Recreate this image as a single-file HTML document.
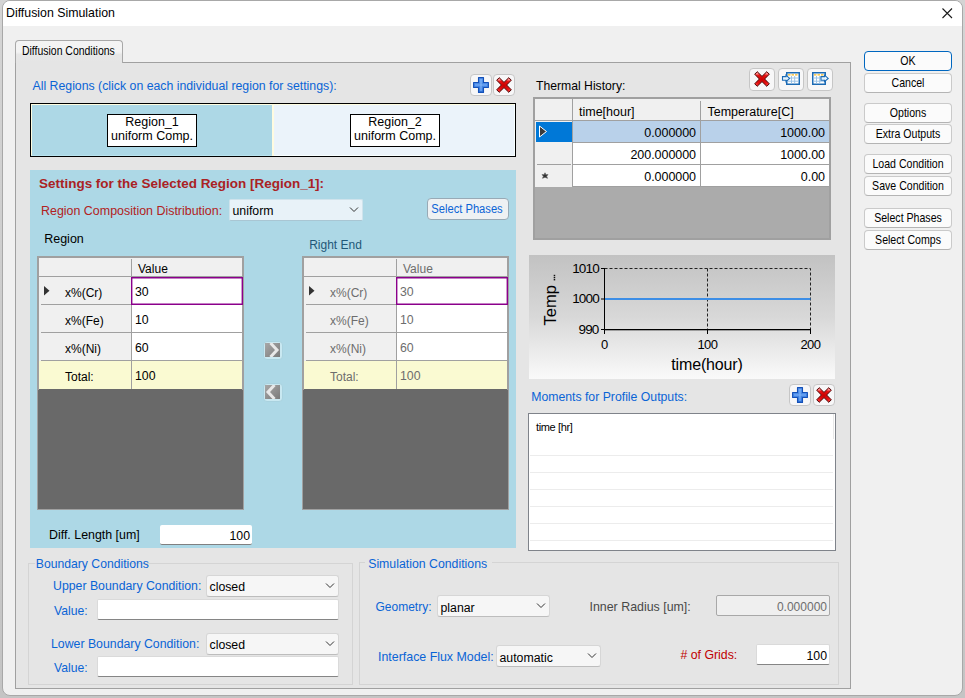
<!DOCTYPE html>
<html><head><meta charset="utf-8"><style>
html,body{margin:0;padding:0;width:965px;height:698px;overflow:hidden;font-family:"Liberation Sans", sans-serif;}
body{position:relative;}
</style></head><body>
<div style="position:absolute;left:0px;top:0px;width:965px;height:698px;box-sizing:border-box;background:linear-gradient(#d4d4d4,#c4c4c4)"></div>
<div style="position:absolute;left:2px;top:0px;width:961px;height:696px;box-sizing:border-box;background:#f0f0f0;border:1px solid #a8a8a8;border-radius:8px;overflow:hidden"></div>
<div style="position:absolute;left:3px;top:1px;width:959px;height:25px;box-sizing:border-box;background:#fff;border-radius:7px 7px 0 0"></div>
<div style="position:absolute;left:6px;top:6.55px;font-size:12.35px;line-height:12.35px;color:#000;font-weight:400;white-space:nowrap;letter-spacing:0px;">Diffusion Simulation</div>
<svg style="position:absolute;left:940px;top:6px" width="14" height="14"><path d="M2.5 2.5 L12 12 M12 2.5 L2.5 12" stroke="#1a1a1a" stroke-width="1.1"/></svg>
<div style="position:absolute;left:15px;top:62px;width:836px;height:627px;box-sizing:border-box;background:#e5e5e5;border:1px solid #a0a0a0"></div>
<div style="position:absolute;left:15px;top:40px;width:108px;height:23px;box-sizing:border-box;background:linear-gradient(#f4f4f4 0%,#f3f3f3 50%,#e6e6e6 62%,#e5e5e5 100%);border:1px solid #a8a8a8;border-bottom:none;border-radius:4px 4px 0 0"></div>
<div style="position:absolute;left:22.4px;top:45.42px;font-size:12.5px;line-height:12.5px;color:#000;font-weight:400;white-space:nowrap;letter-spacing:0px;transform:scaleX(0.836);transform-origin:0 0;">Diffusion Conditions</div>
<div style="position:absolute;left:32.5px;top:79.59px;font-size:12.3px;line-height:12.3px;color:#0a64d6;font-weight:400;white-space:nowrap;letter-spacing:0px;">All Regions (click on each individual region for settings):</div>
<div style="position:absolute;left:470px;top:74px;width:22px;height:22px;box-sizing:border-box;background:#f7f7f8;border:1px solid #c6c6c6;border-radius:4px"></div>
<svg style="position:absolute;left:473px;top:77px" width="16" height="16"><defs><linearGradient id="pg473" x1="0" y1="0" x2="0" y2="1"><stop offset="0" stop-color="#5b9af0"/><stop offset="1" stop-color="#3276dc"/></linearGradient></defs><path d="M5.5 0.6 H10.5 V5.5 H15.4 V10.5 H10.5 V15.4 H5.5 V10.5 H0.6 V5.5 H5.5 Z" fill="url(#pg473)" stroke="#1450b8" stroke-width="1.1" stroke-linejoin="round"/><path d="M8 2 V14 M2 8 H14" stroke="#9cc8ff" stroke-width="1.2" opacity="0.7"/></svg>
<div style="position:absolute;left:493px;top:74px;width:22px;height:22px;box-sizing:border-box;background:#f7f7f8;border:1px solid #c6c6c6;border-radius:4px"></div>
<svg style="position:absolute;left:496px;top:77px" width="16" height="16"><defs><radialGradient id="xg496" cx="0.5" cy="0.55" r="0.6"><stop offset="0" stop-color="#c80000"/><stop offset="0.6" stop-color="#e81010"/><stop offset="1" stop-color="#ff4040"/></radialGradient><linearGradient id="xh496" x1="0" y1="0" x2="0" y2="1"><stop offset="0" stop-color="#fff" stop-opacity="0.75"/><stop offset="0.45" stop-color="#fff" stop-opacity="0"/></linearGradient></defs><path d="M3.2 0.7 L8 5.4 L12.8 0.7 L15.3 3.2 L10.6 8 L15.3 12.8 L12.8 15.3 L8 10.6 L3.2 15.3 L0.7 12.8 L5.4 8 L0.7 3.2 Z" fill="url(#xg496)" stroke="#4a0000" stroke-width="1" stroke-linejoin="round"/><path d="M3.2 1.6 L8 6.4 L12.8 1.6 L14.4 3.2 L10.2 7.4 L5.8 7.4 L1.6 3.2 Z" fill="url(#xh496)"/></svg>
<div style="position:absolute;left:30px;top:103px;width:486px;height:54px;box-sizing:border-box;border:1px solid #000;background:#ebf3fa"></div>
<div style="position:absolute;left:31px;top:104px;width:241px;height:52px;box-sizing:border-box;background:#add8e6;border-top:1px solid #fffde0;border-left:1px solid #fffde0;border-bottom:1px solid #b9e4f0"></div>
<div style="position:absolute;left:272px;top:104px;width:2px;height:52px;box-sizing:border-box;background:#fffbe0"></div>
<div style="position:absolute;left:274px;top:104px;width:241px;height:1px;box-sizing:border-box;background:#fffde0"></div>
<div style="position:absolute;left:514px;top:104px;width:1px;height:52px;box-sizing:border-box;background:#f8ffff"></div>
<div style="position:absolute;left:274px;top:155px;width:240px;height:1px;box-sizing:border-box;background:#f8ffff"></div>
<div style="position:absolute;left:107px;top:114px;width:90px;height:33px;box-sizing:border-box;background:#fff;border:1px solid #000"></div>
<div style="position:absolute;left:350px;top:114px;width:90px;height:33px;box-sizing:border-box;background:#fff;border:1px solid #000"></div>
<div style="position:absolute;left:52px;width:200px;text-align:center;top:115.82px;font-size:12.5px;line-height:12.5px;color:#000;font-weight:400;white-space:nowrap;letter-spacing:0px;">Region_1</div>
<div style="position:absolute;left:52px;width:200px;text-align:center;top:130.02px;font-size:12.5px;line-height:12.5px;color:#000;font-weight:400;white-space:nowrap;letter-spacing:0px;">uniform Comp.</div>
<div style="position:absolute;left:295px;width:200px;text-align:center;top:115.82px;font-size:12.5px;line-height:12.5px;color:#000;font-weight:400;white-space:nowrap;letter-spacing:0px;">Region_2</div>
<div style="position:absolute;left:295px;width:200px;text-align:center;top:130.02px;font-size:12.5px;line-height:12.5px;color:#000;font-weight:400;white-space:nowrap;letter-spacing:0px;">uniform Comp.</div>
<div style="position:absolute;left:30px;top:170px;width:486px;height:378px;box-sizing:border-box;background:#add8e6"></div>
<div style="position:absolute;left:39.3px;top:178.07px;font-size:12.2px;line-height:12.2px;color:#aa2224;font-weight:700;white-space:nowrap;letter-spacing:0px;transform:scaleX(1.105);transform-origin:0 0;">Settings for the Selected Region [Region_1]:</div>
<div style="position:absolute;left:41px;top:205.26px;font-size:12.45px;line-height:12.45px;color:#b22222;font-weight:400;white-space:nowrap;letter-spacing:0px;">Region Composition Distribution:</div>
<div style="position:absolute;left:228.5px;top:198.5px;width:134px;height:22px;box-sizing:border-box;background:#e8f2f8;border:1px solid #cfe3ec;border-bottom-color:#a9c6d3;border-radius:2px"></div>
<div style="position:absolute;left:232.5px;top:204.59px;font-size:12.3px;line-height:12.3px;color:#000;font-weight:400;white-space:nowrap;letter-spacing:0px;">uniform</div>
<svg style="position:absolute;left:349px;top:206px" width="10" height="8"><path d="M1 1.5 L5 5.5 L9 1.5" stroke="#333" stroke-width="1" fill="none"/></svg>
<div style="position:absolute;left:427px;top:198px;width:82px;height:22px;box-sizing:border-box;background:#eef1f3;border:1px solid #98aab6;border-radius:4px"></div>
<div style="position:absolute;left:367px;width:200px;text-align:center;top:203.14px;font-size:12px;line-height:12px;color:#0a64d6;font-weight:400;white-space:nowrap;letter-spacing:0px;transform:scaleX(0.93);transform-origin:50% 0;">Select Phases</div>
<div style="position:absolute;left:44.2px;top:232.92px;font-size:12.5px;line-height:12.5px;color:#000;font-weight:400;white-space:nowrap;letter-spacing:0px;">Region</div>
<div style="position:absolute;left:309.2px;top:239.34px;font-size:12px;line-height:12px;color:#1f5878;font-weight:400;white-space:nowrap;letter-spacing:0px;">Right End</div>
<div style="position:absolute;left:37px;top:256px;width:207px;height:254px;box-sizing:border-box;background:#696969;border:1px solid #a0a0a0"></div>
<div style="position:absolute;left:38px;top:257px;width:205px;height:133px;box-sizing:border-box;border:1px solid #a0a0a0;border-bottom:none"></div>
<div style="position:absolute;left:39px;top:258px;width:203px;height:19px;box-sizing:border-box;background:#f0f0f0;border-bottom:1px solid #a0a0a0"></div>
<div style="position:absolute;left:131px;top:259px;width:1px;height:130px;box-sizing:border-box;background:#a0a0a0"></div>
<div style="position:absolute;left:138px;top:262.64px;font-size:12px;line-height:12px;color:#000;font-weight:400;white-space:nowrap;letter-spacing:0px;">Value</div>
<div style="position:absolute;left:39px;top:277px;width:92px;height:28px;box-sizing:border-box;background:#f0f0f0"></div>
<div style="position:absolute;left:41px;top:304px;width:90px;height:1px;box-sizing:border-box;background:#a0a0a0"></div>
<div style="position:absolute;left:132px;top:277px;width:110px;height:28px;box-sizing:border-box;background:#fff;border-bottom:1px solid #a0a0a0"></div>
<div style="position:absolute;left:65px;top:287.34px;font-size:12px;line-height:12px;color:#000;font-weight:400;white-space:nowrap;letter-spacing:0px;">x%(Cr)</div>
<div style="position:absolute;left:135px;top:286.09px;font-size:12.3px;line-height:12.3px;color:#000;font-weight:400;white-space:nowrap;letter-spacing:0px;">30</div>
<div style="position:absolute;left:39px;top:305px;width:92px;height:28px;box-sizing:border-box;background:#f0f0f0"></div>
<div style="position:absolute;left:41px;top:332px;width:90px;height:1px;box-sizing:border-box;background:#a0a0a0"></div>
<div style="position:absolute;left:132px;top:305px;width:110px;height:28px;box-sizing:border-box;background:#fff;border-bottom:1px solid #a0a0a0"></div>
<div style="position:absolute;left:65px;top:315.34px;font-size:12px;line-height:12px;color:#000;font-weight:400;white-space:nowrap;letter-spacing:0px;">x%(Fe)</div>
<div style="position:absolute;left:135px;top:314.09px;font-size:12.3px;line-height:12.3px;color:#000;font-weight:400;white-space:nowrap;letter-spacing:0px;">10</div>
<div style="position:absolute;left:39px;top:333px;width:92px;height:28px;box-sizing:border-box;background:#f0f0f0"></div>
<div style="position:absolute;left:41px;top:360px;width:90px;height:1px;box-sizing:border-box;background:#a0a0a0"></div>
<div style="position:absolute;left:132px;top:333px;width:110px;height:28px;box-sizing:border-box;background:#fff;border-bottom:1px solid #a0a0a0"></div>
<div style="position:absolute;left:65px;top:343.34px;font-size:12px;line-height:12px;color:#000;font-weight:400;white-space:nowrap;letter-spacing:0px;">x%(Ni)</div>
<div style="position:absolute;left:135px;top:342.09px;font-size:12.3px;line-height:12.3px;color:#000;font-weight:400;white-space:nowrap;letter-spacing:0px;">60</div>
<div style="position:absolute;left:39px;top:361px;width:203px;height:28px;box-sizing:border-box;background:#fafad2"></div>
<div style="position:absolute;left:131px;top:361px;width:1px;height:28px;box-sizing:border-box;background:#a0a0a0"></div>
<div style="position:absolute;left:65px;top:371.34px;font-size:12px;line-height:12px;color:#000;font-weight:400;white-space:nowrap;letter-spacing:0px;">Total:</div>
<div style="position:absolute;left:135px;top:370.09px;font-size:12.3px;line-height:12.3px;color:#000;font-weight:400;white-space:nowrap;letter-spacing:0px;">100</div>
<div style="position:absolute;left:131px;top:277px;width:112px;height:28px;box-sizing:border-box;border:1px solid #8b008b;box-shadow:inset 0 0 0 0.4px #8b008b"></div>
<svg style="position:absolute;left:44px;top:286px" width="7" height="11"><path d="M0 0 L5.5 4.75 L0 9.5 Z" fill="#333"/></svg>
<div style="position:absolute;left:302px;top:256px;width:207px;height:254px;box-sizing:border-box;background:#696969;border:1px solid #a0a0a0"></div>
<div style="position:absolute;left:303px;top:257px;width:205px;height:133px;box-sizing:border-box;border:1px solid #a0a0a0;border-bottom:none"></div>
<div style="position:absolute;left:304px;top:258px;width:203px;height:19px;box-sizing:border-box;background:#f0f0f0;border-bottom:1px solid #a0a0a0"></div>
<div style="position:absolute;left:396px;top:259px;width:1px;height:130px;box-sizing:border-box;background:#a0a0a0"></div>
<div style="position:absolute;left:403px;top:262.64px;font-size:12px;line-height:12px;color:#6d6d6d;font-weight:400;white-space:nowrap;letter-spacing:0px;">Value</div>
<div style="position:absolute;left:304px;top:277px;width:92px;height:28px;box-sizing:border-box;background:#f0f0f0"></div>
<div style="position:absolute;left:306px;top:304px;width:90px;height:1px;box-sizing:border-box;background:#a0a0a0"></div>
<div style="position:absolute;left:397px;top:277px;width:110px;height:28px;box-sizing:border-box;background:#fff;border-bottom:1px solid #a0a0a0"></div>
<div style="position:absolute;left:330px;top:287.34px;font-size:12px;line-height:12px;color:#6d6d6d;font-weight:400;white-space:nowrap;letter-spacing:0px;">x%(Cr)</div>
<div style="position:absolute;left:400px;top:286.09px;font-size:12.3px;line-height:12.3px;color:#6d6d6d;font-weight:400;white-space:nowrap;letter-spacing:0px;">30</div>
<div style="position:absolute;left:304px;top:305px;width:92px;height:28px;box-sizing:border-box;background:#f0f0f0"></div>
<div style="position:absolute;left:306px;top:332px;width:90px;height:1px;box-sizing:border-box;background:#a0a0a0"></div>
<div style="position:absolute;left:397px;top:305px;width:110px;height:28px;box-sizing:border-box;background:#fff;border-bottom:1px solid #a0a0a0"></div>
<div style="position:absolute;left:330px;top:315.34px;font-size:12px;line-height:12px;color:#6d6d6d;font-weight:400;white-space:nowrap;letter-spacing:0px;">x%(Fe)</div>
<div style="position:absolute;left:400px;top:314.09px;font-size:12.3px;line-height:12.3px;color:#6d6d6d;font-weight:400;white-space:nowrap;letter-spacing:0px;">10</div>
<div style="position:absolute;left:304px;top:333px;width:92px;height:28px;box-sizing:border-box;background:#f0f0f0"></div>
<div style="position:absolute;left:306px;top:360px;width:90px;height:1px;box-sizing:border-box;background:#a0a0a0"></div>
<div style="position:absolute;left:397px;top:333px;width:110px;height:28px;box-sizing:border-box;background:#fff;border-bottom:1px solid #a0a0a0"></div>
<div style="position:absolute;left:330px;top:343.34px;font-size:12px;line-height:12px;color:#6d6d6d;font-weight:400;white-space:nowrap;letter-spacing:0px;">x%(Ni)</div>
<div style="position:absolute;left:400px;top:342.09px;font-size:12.3px;line-height:12.3px;color:#6d6d6d;font-weight:400;white-space:nowrap;letter-spacing:0px;">60</div>
<div style="position:absolute;left:304px;top:361px;width:203px;height:28px;box-sizing:border-box;background:#fafad2"></div>
<div style="position:absolute;left:396px;top:361px;width:1px;height:28px;box-sizing:border-box;background:#a0a0a0"></div>
<div style="position:absolute;left:330px;top:371.34px;font-size:12px;line-height:12px;color:#6d6d6d;font-weight:400;white-space:nowrap;letter-spacing:0px;">Total:</div>
<div style="position:absolute;left:400px;top:370.09px;font-size:12.3px;line-height:12.3px;color:#6d6d6d;font-weight:400;white-space:nowrap;letter-spacing:0px;">100</div>
<div style="position:absolute;left:396px;top:277px;width:112px;height:28px;box-sizing:border-box;border:1px solid #8b008b;box-shadow:inset 0 0 0 0.4px #8b008b"></div>
<svg style="position:absolute;left:309px;top:286px" width="7" height="11"><path d="M0 0 L5.5 4.75 L0 9.5 Z" fill="#333"/></svg>
<div style="position:absolute;left:263px;top:341px;width:20px;height:19px;box-sizing:border-box;background:#c9e8f1;border:1px solid #a9d2df;border-radius:4px"></div>
<svg style="position:absolute;left:265px;top:343px" width="15" height="14"><defs><linearGradient id="ag341" x1="0" y1="0" x2="1" y2="1"><stop offset="0" stop-color="#a8a8a8"/><stop offset="1" stop-color="#7a7a7a"/></linearGradient></defs><rect x="0" y="0" width="15" height="14" fill="url(#ag341)"/><path d="M5.5 0 L12 7 L5.5 14" stroke="#e8e8e8" stroke-width="3" fill="none"/></svg>
<div style="position:absolute;left:263px;top:383px;width:20px;height:19px;box-sizing:border-box;background:#c9e8f1;border:1px solid #a9d2df;border-radius:4px"></div>
<svg style="position:absolute;left:265px;top:385px" width="15" height="14"><defs><linearGradient id="ag383" x1="0" y1="0" x2="1" y2="1"><stop offset="0" stop-color="#a8a8a8"/><stop offset="1" stop-color="#7a7a7a"/></linearGradient></defs><rect x="0" y="0" width="15" height="14" fill="url(#ag383)"/><path d="M9.5 0 L3 7 L9.5 14" stroke="#e8e8e8" stroke-width="3" fill="none"/></svg>
<div style="position:absolute;left:49px;top:529.00px;font-size:12.4px;line-height:12.4px;color:#000;font-weight:400;white-space:nowrap;letter-spacing:0px;">Diff. Length [um]</div>
<div style="position:absolute;left:160px;top:525px;width:92px;height:20px;box-sizing:border-box;background:#fff;border-bottom:1px solid #808080;border-radius:2px"></div>
<div style="position:absolute;right:715px;top:529.59px;font-size:12.3px;line-height:12.3px;color:#000;font-weight:400;white-space:nowrap;letter-spacing:0px;">100</div>
<div style="position:absolute;left:536px;top:79.67px;font-size:12.2px;line-height:12.2px;color:#000;font-weight:400;white-space:nowrap;letter-spacing:0px;">Thermal History:</div>
<div style="position:absolute;left:749px;top:68px;width:26px;height:23px;box-sizing:border-box;background:#f7f7f8;border:1px solid #c6c6c6;border-radius:4px"></div>
<svg style="position:absolute;left:754px;top:71px" width="16" height="16"><defs><radialGradient id="xg754" cx="0.5" cy="0.55" r="0.6"><stop offset="0" stop-color="#c80000"/><stop offset="0.6" stop-color="#e81010"/><stop offset="1" stop-color="#ff4040"/></radialGradient><linearGradient id="xh754" x1="0" y1="0" x2="0" y2="1"><stop offset="0" stop-color="#fff" stop-opacity="0.75"/><stop offset="0.45" stop-color="#fff" stop-opacity="0"/></linearGradient></defs><path d="M3.2 0.7 L8 5.4 L12.8 0.7 L15.3 3.2 L10.6 8 L15.3 12.8 L12.8 15.3 L8 10.6 L3.2 15.3 L0.7 12.8 L5.4 8 L0.7 3.2 Z" fill="url(#xg754)" stroke="#4a0000" stroke-width="1" stroke-linejoin="round"/><path d="M3.2 1.6 L8 6.4 L12.8 1.6 L14.4 3.2 L10.2 7.4 L5.8 7.4 L1.6 3.2 Z" fill="url(#xh754)"/></svg>
<div style="position:absolute;left:778px;top:68px;width:26px;height:23px;box-sizing:border-box;background:#f7f7f8;border:1px solid #c6c6c6;border-radius:4px"></div>
<div style="position:absolute;left:807px;top:68px;width:26px;height:23px;box-sizing:border-box;background:#f7f7f8;border:1px solid #c6c6c6;border-radius:4px"></div>
<svg style="position:absolute;left:781px;top:70px" width="20" height="18">
<rect x="5.75" y="2.75" width="12.5" height="11.5" fill="#fff" stroke="#1c6bb5" stroke-width="1.5"/>
<path d="M7 4.8 H9.5 M10.5 4.8 H13 M14 4.8 H16.5" stroke="#f5b820" stroke-width="1.2"/>
<path d="M6.5 8 H17.5 M6.5 11.2 H17.5 M10.5 6 V13.5 M13.7 6 V13.5" stroke="#9cc3e6" stroke-width="1"/>
<path d="M1.5 6.6 H5 V5.2 L8.6 8.4 L5 11.6 V10.2 H1.5 Z" fill="#e6f4ff" stroke="#1c6bb5" stroke-width="1.1"/>
</svg>
<svg style="position:absolute;left:810px;top:70px" width="20" height="18">
<rect x="2.75" y="2.75" width="12.5" height="11.5" fill="#fff" stroke="#1c6bb5" stroke-width="1.5"/>
<path d="M4 4.8 H6.5 M7.5 4.8 H10 M11 4.8 H13.5" stroke="#f5b820" stroke-width="1.2"/>
<path d="M3.5 8 H14.5 M3.5 11.2 H14.5 M6.5 6 V13.5 M9.7 6 V13.5" stroke="#9cc3e6" stroke-width="1"/>
<path d="M11 6.6 H14.5 V5.2 L18.2 8.4 L14.5 11.6 V10.2 H11 Z" fill="#e6f4ff" stroke="#1c6bb5" stroke-width="1.1"/>
</svg>
<div style="position:absolute;left:533px;top:97px;width:298px;height:143px;box-sizing:border-box;background:#ababab;border:2px solid #a0a0a0"></div>
<div style="position:absolute;left:535px;top:99px;width:294px;height:22px;box-sizing:border-box;background:#f0f0f0;border-bottom:1px solid #a0a0a0"></div>
<div style="position:absolute;left:572px;top:99px;width:1px;height:88px;box-sizing:border-box;background:#a0a0a0"></div>
<div style="position:absolute;left:700px;top:101px;width:1px;height:86px;box-sizing:border-box;background:#a0a0a0"></div>
<div style="position:absolute;left:579px;top:106.42px;font-size:12.5px;line-height:12.5px;color:#000;font-weight:400;white-space:nowrap;letter-spacing:0px;">time[hour]</div>
<div style="position:absolute;left:707.5px;top:106.42px;font-size:12.5px;line-height:12.5px;color:#000;font-weight:400;white-space:nowrap;letter-spacing:0px;">Temperature[C]</div>
<div style="position:absolute;left:535px;top:121px;width:37px;height:22px;box-sizing:border-box;background:#f0f0f0"></div>
<div style="position:absolute;left:536px;top:122px;width:36px;height:20px;box-sizing:border-box;background:#0078d7"></div>
<div style="position:absolute;left:573px;top:121px;width:127px;height:22px;box-sizing:border-box;background:#b9d1ea;border-bottom:1px solid #a0a0a0"></div>
<div style="position:absolute;left:701px;top:121px;width:128px;height:22px;box-sizing:border-box;background:#b9d1ea;border-bottom:1px solid #a0a0a0"></div>
<div style="position:absolute;right:269px;top:127.42px;font-size:12.5px;line-height:12.5px;color:#000;font-weight:400;white-space:nowrap;letter-spacing:-0.05px;">0.000000</div>
<div style="position:absolute;right:140px;top:127.42px;font-size:12.5px;line-height:12.5px;color:#000;font-weight:400;white-space:nowrap;letter-spacing:-0.05px;">1000.00</div>
<div style="position:absolute;left:535px;top:143px;width:37px;height:22px;box-sizing:border-box;background:#f0f0f0"></div>
<div style="position:absolute;left:537px;top:164px;width:34px;height:1px;box-sizing:border-box;background:#a0a0a0"></div>
<div style="position:absolute;left:573px;top:143px;width:127px;height:22px;box-sizing:border-box;background:#fff;border-bottom:1px solid #a0a0a0"></div>
<div style="position:absolute;left:701px;top:143px;width:128px;height:22px;box-sizing:border-box;background:#fff;border-bottom:1px solid #a0a0a0"></div>
<div style="position:absolute;right:269px;top:149.42px;font-size:12.5px;line-height:12.5px;color:#000;font-weight:400;white-space:nowrap;letter-spacing:-0.05px;">200.000000</div>
<div style="position:absolute;right:140px;top:149.42px;font-size:12.5px;line-height:12.5px;color:#000;font-weight:400;white-space:nowrap;letter-spacing:-0.05px;">1000.00</div>
<div style="position:absolute;left:535px;top:165px;width:37px;height:22px;box-sizing:border-box;background:#f0f0f0"></div>
<div style="position:absolute;left:573px;top:165px;width:127px;height:22px;box-sizing:border-box;background:#fff;border-bottom:1px solid #a0a0a0"></div>
<div style="position:absolute;left:701px;top:165px;width:128px;height:22px;box-sizing:border-box;background:#fff;border-bottom:1px solid #a0a0a0"></div>
<div style="position:absolute;right:269px;top:171.42px;font-size:12.5px;line-height:12.5px;color:#000;font-weight:400;white-space:nowrap;letter-spacing:-0.05px;">0.000000</div>
<div style="position:absolute;right:140px;top:171.42px;font-size:12.5px;line-height:12.5px;color:#000;font-weight:400;white-space:nowrap;letter-spacing:-0.05px;">0.00</div>
<svg style="position:absolute;left:538px;top:125px" width="11" height="13"><path d="M1.5 1 L8.5 6.5 L1.5 12 Z" fill="#3a3a3a" stroke="#fff" stroke-width="1"/></svg>
<svg style="position:absolute;left:541px;top:172px" width="8" height="8"><path d="M4 0.8 L4.9 2.8 L7 2.6 L5.6 4.2 L6.5 6.3 L4 5.3 L1.5 6.3 L2.4 4.2 L1 2.6 L3.1 2.8 Z" fill="#333" stroke="#555" stroke-width="0.6"/></svg>
<div style="position:absolute;left:529px;top:255px;width:306px;height:124px;box-sizing:border-box;background:linear-gradient(#c2c2c2,#d8d8d8 50%,#fafafa)"></div>
<svg style="position:absolute;left:529px;top:255px" width="306" height="124">
<path d="M75.5 13.5 H281.5 V74.5" stroke="#222" stroke-width="1" stroke-dasharray="3,2" fill="none"/>
<path d="M178.5 13.5 V74.5" stroke="#222" stroke-width="1" stroke-dasharray="3,2" fill="none"/>
<path d="M75.5 13 V74.5 H282" stroke="#000" stroke-width="1" fill="none"/><path d="M75.5 13 V75 H282" stroke="#000" stroke-width="0.6" fill="none"/>
<path d="M72 13.5 H75.5 M72 44 H75.5 M72 74.5 H75.5 M75.5 75 V79 M178.5 75 V79 M281.5 75 V79" stroke="#000" stroke-width="1" fill="none"/>
<path d="M76 44 H281.5" stroke="#3d8ee6" stroke-width="2" fill="none"/>
</svg>
<div style="position:absolute;right:366.20000000000005px;top:261.57px;font-size:13.5px;line-height:13.5px;color:#000;font-weight:400;white-space:nowrap;letter-spacing:-0.85px;">1010</div>
<div style="position:absolute;right:366.20000000000005px;top:291.57px;font-size:13.5px;line-height:13.5px;color:#000;font-weight:400;white-space:nowrap;letter-spacing:-0.85px;">1000</div>
<div style="position:absolute;right:366.5px;top:322.57px;font-size:13.5px;line-height:13.5px;color:#000;font-weight:400;white-space:nowrap;letter-spacing:-0.85px;">990</div>
<div style="position:absolute;left:504.5px;width:200px;text-align:center;top:337.50px;font-size:13px;line-height:13px;color:#000;font-weight:400;white-space:nowrap;letter-spacing:0px;">0</div>
<div style="position:absolute;left:607.5px;width:200px;text-align:center;top:338.00px;font-size:13px;line-height:13px;color:#000;font-weight:400;white-space:nowrap;letter-spacing:-0.5px;">100</div>
<div style="position:absolute;left:710.5px;width:200px;text-align:center;top:338.00px;font-size:13px;line-height:13px;color:#000;font-weight:400;white-space:nowrap;letter-spacing:-0.5px;">200</div>
<div style="position:absolute;left:607px;width:200px;text-align:center;top:356.96px;font-size:16px;line-height:16px;color:#000;font-weight:400;white-space:nowrap;letter-spacing:-0.15px;">time(hour)</div>
<div style="position:absolute;left:520px;top:292.5px;width:60px;height:20px;transform:rotate(-90deg);font-size:16.5px;line-height:20px;text-align:center;color:#000;letter-spacing:0px">Temp&nbsp;</div>
<svg style="position:absolute;left:552px;top:273px" width="5" height="9"><rect x="1.7" y="1.8" width="1.5" height="1.4" fill="#111"/><rect x="1.7" y="3.9" width="1.5" height="1.4" fill="#111"/><rect x="1.7" y="6" width="1.5" height="1.4" fill="#111"/></svg>
<div style="position:absolute;left:531.2px;top:390.63px;font-size:12.25px;line-height:12.25px;color:#0a64d6;font-weight:400;white-space:nowrap;letter-spacing:0px;">Moments for Profile Outputs:</div>
<div style="position:absolute;left:789px;top:384px;width:22px;height:22px;box-sizing:border-box;background:#f7f7f8;border:1px solid #c6c6c6;border-radius:4px"></div>
<svg style="position:absolute;left:792px;top:387px" width="16" height="16"><defs><linearGradient id="pg792" x1="0" y1="0" x2="0" y2="1"><stop offset="0" stop-color="#5b9af0"/><stop offset="1" stop-color="#3276dc"/></linearGradient></defs><path d="M5.5 0.6 H10.5 V5.5 H15.4 V10.5 H10.5 V15.4 H5.5 V10.5 H0.6 V5.5 H5.5 Z" fill="url(#pg792)" stroke="#1450b8" stroke-width="1.1" stroke-linejoin="round"/><path d="M8 2 V14 M2 8 H14" stroke="#9cc8ff" stroke-width="1.2" opacity="0.7"/></svg>
<div style="position:absolute;left:813px;top:384px;width:22px;height:22px;box-sizing:border-box;background:#f7f7f8;border:1px solid #c6c6c6;border-radius:4px"></div>
<svg style="position:absolute;left:816px;top:387px" width="16" height="16"><defs><radialGradient id="xg816" cx="0.5" cy="0.55" r="0.6"><stop offset="0" stop-color="#c80000"/><stop offset="0.6" stop-color="#e81010"/><stop offset="1" stop-color="#ff4040"/></radialGradient><linearGradient id="xh816" x1="0" y1="0" x2="0" y2="1"><stop offset="0" stop-color="#fff" stop-opacity="0.75"/><stop offset="0.45" stop-color="#fff" stop-opacity="0"/></linearGradient></defs><path d="M3.2 0.7 L8 5.4 L12.8 0.7 L15.3 3.2 L10.6 8 L15.3 12.8 L12.8 15.3 L8 10.6 L3.2 15.3 L0.7 12.8 L5.4 8 L0.7 3.2 Z" fill="url(#xg816)" stroke="#4a0000" stroke-width="1" stroke-linejoin="round"/><path d="M3.2 1.6 L8 6.4 L12.8 1.6 L14.4 3.2 L10.2 7.4 L5.8 7.4 L1.6 3.2 Z" fill="url(#xh816)"/></svg>
<div style="position:absolute;left:528px;top:413px;width:308px;height:138px;box-sizing:border-box;background:#fff;border:1px solid #7f838a"></div>
<div style="position:absolute;left:536px;top:421.69px;font-size:11px;line-height:11px;color:#000;font-weight:400;white-space:nowrap;letter-spacing:-0.35px;">time [hr]</div>
<div style="position:absolute;left:530px;top:455px;width:303px;height:1px;box-sizing:border-box;background:#ececec"></div>
<div style="position:absolute;left:530px;top:472px;width:303px;height:1px;box-sizing:border-box;background:#ececec"></div>
<div style="position:absolute;left:530px;top:489px;width:303px;height:1px;box-sizing:border-box;background:#ececec"></div>
<div style="position:absolute;left:530px;top:506px;width:303px;height:1px;box-sizing:border-box;background:#ececec"></div>
<div style="position:absolute;left:530px;top:523px;width:303px;height:1px;box-sizing:border-box;background:#ececec"></div>
<div style="position:absolute;left:530px;top:540px;width:303px;height:1px;box-sizing:border-box;background:#ececec"></div>
<div style="position:absolute;left:833px;top:414px;width:1px;height:25px;box-sizing:border-box;background:#e8e8e8"></div>
<div style="position:absolute;left:27.5px;top:562.5px;width:325.5px;height:122px;box-sizing:border-box;border:1px solid #d4d4d4"></div>
<div style="position:absolute;left:35px;top:560.5px;width:88px;height:5px;box-sizing:border-box;background:#e5e5e5"></div>
<div style="position:absolute;left:35.8px;top:557.67px;font-size:12.2px;line-height:12.2px;color:#0a64d6;font-weight:400;white-space:nowrap;letter-spacing:0px;">Boundary Conditions</div>
<div style="position:absolute;left:53px;top:580.09px;font-size:12.3px;line-height:12.3px;color:#0a64d6;font-weight:400;white-space:nowrap;letter-spacing:0px;">Upper Boundary Condition:</div>
<div style="position:absolute;left:205.5px;top:574.5px;width:133px;height:22px;box-sizing:border-box;background:#f6f6f6;border:1px solid #d6d6d6;border-bottom-color:#bdbdbd;border-radius:3px"></div>
<div style="position:absolute;left:209.5px;top:581.09px;font-size:12.3px;line-height:12.3px;color:#000;font-weight:400;white-space:nowrap;letter-spacing:0px;">closed</div>
<svg style="position:absolute;left:324.5px;top:581.5px" width="10" height="8"><path d="M1 1.5 L5 5.5 L9 1.5" stroke="#333" stroke-width="1" fill="none"/></svg>
<div style="position:absolute;left:54px;top:605.17px;font-size:12.2px;line-height:12.2px;color:#0a64d6;font-weight:400;white-space:nowrap;letter-spacing:0px;">Value:</div>
<div style="position:absolute;left:97px;top:599px;width:242px;height:21px;box-sizing:border-box;background:#fff;border:1px solid #dadada;border-bottom:1px solid #858585;border-radius:2px"></div>
<div style="position:absolute;left:51px;top:637.59px;font-size:12.3px;line-height:12.3px;color:#0a64d6;font-weight:400;white-space:nowrap;letter-spacing:0px;">Lower Boundary Condition:</div>
<div style="position:absolute;left:205.5px;top:632.5px;width:133px;height:22px;box-sizing:border-box;background:#f6f6f6;border:1px solid #d6d6d6;border-bottom-color:#bdbdbd;border-radius:3px"></div>
<div style="position:absolute;left:209.5px;top:639.09px;font-size:12.3px;line-height:12.3px;color:#000;font-weight:400;white-space:nowrap;letter-spacing:0px;">closed</div>
<svg style="position:absolute;left:324.5px;top:639.5px" width="10" height="8"><path d="M1 1.5 L5 5.5 L9 1.5" stroke="#333" stroke-width="1" fill="none"/></svg>
<div style="position:absolute;left:54px;top:661.97px;font-size:12.2px;line-height:12.2px;color:#0a64d6;font-weight:400;white-space:nowrap;letter-spacing:0px;">Value:</div>
<div style="position:absolute;left:97px;top:656px;width:242px;height:21px;box-sizing:border-box;background:#fff;border:1px solid #dadada;border-bottom:1px solid #858585;border-radius:2px"></div>
<div style="position:absolute;left:359px;top:562px;width:480px;height:123px;box-sizing:border-box;border:1px solid #d4d4d4"></div>
<div style="position:absolute;left:365px;top:560px;width:127px;height:5px;box-sizing:border-box;background:#e5e5e5"></div>
<div style="position:absolute;left:368.2px;top:557.89px;font-size:12.3px;line-height:12.3px;color:#0a64d6;font-weight:400;white-space:nowrap;letter-spacing:0px;">Simulation Conditions</div>
<div style="position:absolute;left:375.5px;top:601.14px;font-size:12px;line-height:12px;color:#0a64d6;font-weight:400;white-space:nowrap;letter-spacing:0px;">Geometry:</div>
<div style="position:absolute;left:436.5px;top:595px;width:113px;height:22px;box-sizing:border-box;background:#f6f6f6;border:1px solid #d6d6d6;border-bottom-color:#bdbdbd;border-radius:3px"></div>
<div style="position:absolute;left:440.5px;top:601.59px;font-size:12.3px;line-height:12.3px;color:#000;font-weight:400;white-space:nowrap;letter-spacing:0px;">planar</div>
<svg style="position:absolute;left:535.5px;top:602px" width="10" height="8"><path d="M1 1.5 L5 5.5 L9 1.5" stroke="#333" stroke-width="1" fill="none"/></svg>
<div style="position:absolute;left:589.5px;top:600.50px;font-size:12.4px;line-height:12.4px;color:#484848;font-weight:400;white-space:nowrap;letter-spacing:0px;">Inner Radius [um]:</div>
<div style="position:absolute;left:716px;top:594.5px;width:114px;height:21px;box-sizing:border-box;background:#efefef;border:1px solid #a8a8a8;border-radius:2px"></div>
<div style="position:absolute;right:138px;top:600.84px;font-size:12px;line-height:12px;color:#6d6d6d;font-weight:400;white-space:nowrap;letter-spacing:0px;">0.000000</div>
<div style="position:absolute;left:378px;top:650.50px;font-size:12.4px;line-height:12.4px;color:#0a64d6;font-weight:400;white-space:nowrap;letter-spacing:0px;">Interface Flux Model:</div>
<div style="position:absolute;left:495.5px;top:645px;width:105px;height:22px;box-sizing:border-box;background:#f6f6f6;border:1px solid #d6d6d6;border-bottom-color:#bdbdbd;border-radius:3px"></div>
<div style="position:absolute;left:499.5px;top:651.59px;font-size:12.3px;line-height:12.3px;color:#000;font-weight:400;white-space:nowrap;letter-spacing:0px;">automatic</div>
<svg style="position:absolute;left:586.5px;top:652px" width="10" height="8"><path d="M1 1.5 L5 5.5 L9 1.5" stroke="#333" stroke-width="1" fill="none"/></svg>
<div style="position:absolute;left:680.5px;top:648.59px;font-size:12.3px;line-height:12.3px;color:#c00000;font-weight:400;white-space:nowrap;letter-spacing:0px;"># of Grids:</div>
<div style="position:absolute;left:755.5px;top:644px;width:74px;height:21px;box-sizing:border-box;background:#fff;border:1px solid #dadada;border-bottom:1px solid #858585;border-radius:2px"></div>
<div style="position:absolute;right:138px;top:649.59px;font-size:12.3px;line-height:12.3px;color:#000;font-weight:400;white-space:nowrap;letter-spacing:0px;">100</div>
<div style="position:absolute;left:864px;top:51px;width:88px;height:20px;box-sizing:border-box;background:#fbfbfb;border:1px solid #0067c0;border-bottom-color:#0067c0;border-radius:4px"></div>
<div style="position:absolute;left:807.5px;width:200px;text-align:center;top:54.83px;font-size:12.6px;line-height:12.6px;color:#000;font-weight:400;white-space:nowrap;letter-spacing:0px;transform:scaleX(0.84);transform-origin:50% 0;">OK</div>
<div style="position:absolute;left:864px;top:73px;width:88px;height:20px;box-sizing:border-box;background:#fbfbfb;border:1px solid #cacaca;border-bottom-color:#b4b4b4;border-radius:4px"></div>
<div style="position:absolute;left:807.5px;width:200px;text-align:center;top:76.83px;font-size:12.6px;line-height:12.6px;color:#000;font-weight:400;white-space:nowrap;letter-spacing:0px;transform:scaleX(0.84);transform-origin:50% 0;">Cancel</div>
<div style="position:absolute;left:864px;top:103px;width:88px;height:20px;box-sizing:border-box;background:#fbfbfb;border:1px solid #cacaca;border-bottom-color:#b4b4b4;border-radius:4px"></div>
<div style="position:absolute;left:807.5px;width:200px;text-align:center;top:106.83px;font-size:12.6px;line-height:12.6px;color:#000;font-weight:400;white-space:nowrap;letter-spacing:0px;transform:scaleX(0.84);transform-origin:50% 0;">Options</div>
<div style="position:absolute;left:864px;top:124px;width:88px;height:20px;box-sizing:border-box;background:#fbfbfb;border:1px solid #cacaca;border-bottom-color:#b4b4b4;border-radius:4px"></div>
<div style="position:absolute;left:807.5px;width:200px;text-align:center;top:127.83px;font-size:12.6px;line-height:12.6px;color:#000;font-weight:400;white-space:nowrap;letter-spacing:0px;transform:scaleX(0.84);transform-origin:50% 0;">Extra Outputs</div>
<div style="position:absolute;left:864px;top:154px;width:88px;height:20px;box-sizing:border-box;background:#fbfbfb;border:1px solid #cacaca;border-bottom-color:#b4b4b4;border-radius:4px"></div>
<div style="position:absolute;left:807.5px;width:200px;text-align:center;top:157.83px;font-size:12.6px;line-height:12.6px;color:#000;font-weight:400;white-space:nowrap;letter-spacing:0px;transform:scaleX(0.84);transform-origin:50% 0;">Load Condition</div>
<div style="position:absolute;left:864px;top:176px;width:88px;height:20px;box-sizing:border-box;background:#fbfbfb;border:1px solid #cacaca;border-bottom-color:#b4b4b4;border-radius:4px"></div>
<div style="position:absolute;left:807.5px;width:200px;text-align:center;top:179.83px;font-size:12.6px;line-height:12.6px;color:#000;font-weight:400;white-space:nowrap;letter-spacing:0px;transform:scaleX(0.84);transform-origin:50% 0;">Save Condition</div>
<div style="position:absolute;left:864px;top:208px;width:88px;height:20px;box-sizing:border-box;background:#fbfbfb;border:1px solid #cacaca;border-bottom-color:#b4b4b4;border-radius:4px"></div>
<div style="position:absolute;left:807.5px;width:200px;text-align:center;top:211.83px;font-size:12.6px;line-height:12.6px;color:#000;font-weight:400;white-space:nowrap;letter-spacing:0px;transform:scaleX(0.84);transform-origin:50% 0;">Select Phases</div>
<div style="position:absolute;left:864px;top:230px;width:88px;height:20px;box-sizing:border-box;background:#fbfbfb;border:1px solid #cacaca;border-bottom-color:#b4b4b4;border-radius:4px"></div>
<div style="position:absolute;left:807.5px;width:200px;text-align:center;top:233.83px;font-size:12.6px;line-height:12.6px;color:#000;font-weight:400;white-space:nowrap;letter-spacing:0px;transform:scaleX(0.84);transform-origin:50% 0;">Select Comps</div>
</body></html>
